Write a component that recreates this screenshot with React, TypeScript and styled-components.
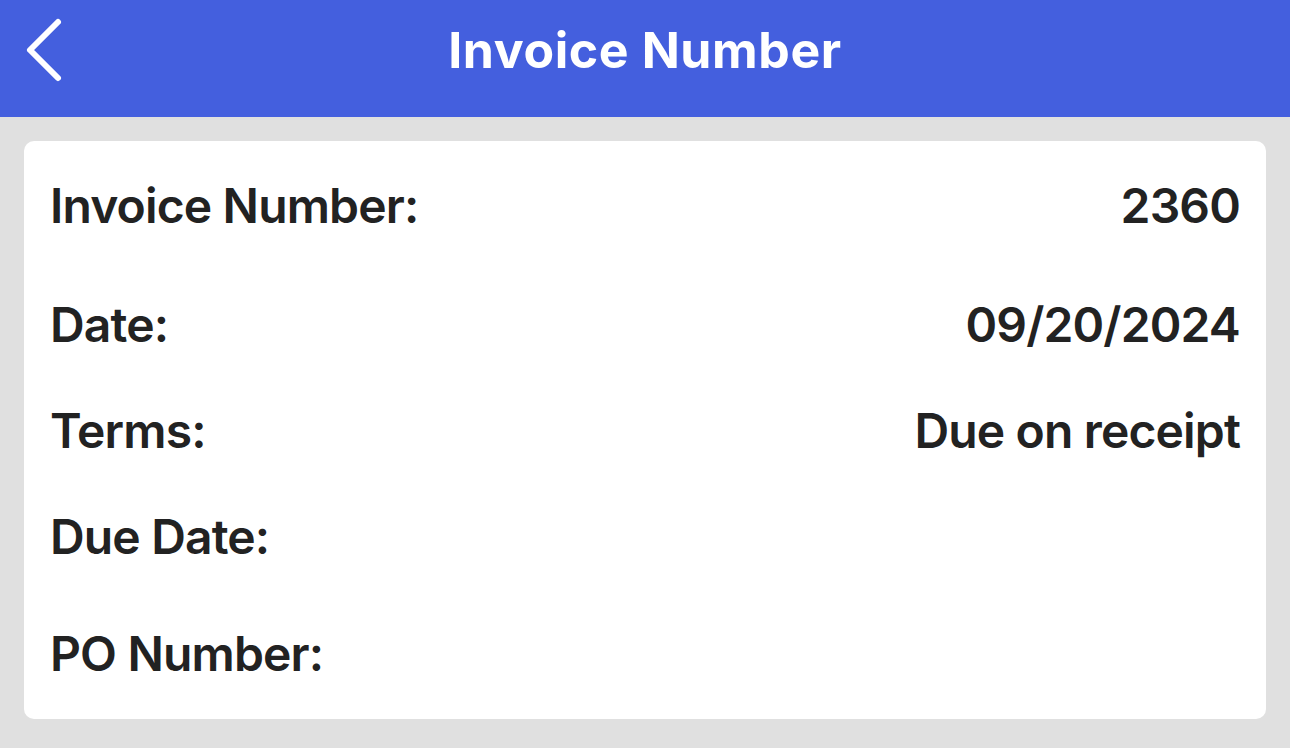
import React from "react";
import styled, { createGlobalStyle } from "styled-components";

const GlobalStyle = createGlobalStyle`
  html, body {
    margin: 0;
    padding: 0;
    background: #e0e0e0;
    font-family: "Inter", "Roboto", "Liberation Sans", sans-serif;
  }
  * { box-sizing: border-box; }
`;

const Screen = styled.div`
  width: 1290px;
  min-height: 748px;
  display: flex;
  flex-direction: column;
  background: #e0e0e0;
`;

const Header = styled.header`
  height: 117px;
  background: #445fde;
  padding-bottom: 17px;
  display: flex;
  flex-direction: column;
`;

const NavRow = styled.div`
  flex: 1;
  display: grid;
  grid-template-columns: 120px 1fr 120px;
  align-items: center;
`;

const BackButton = styled.button`
  border: 0;
  background: transparent;
  padding: 0 0 0 22px;
  display: flex;
  align-items: center;
  height: 70px;
  cursor: pointer;
`;

const Title = styled.h1`
  margin: 0;
  text-align: center;
  color: #ffffff;
  font-size: 50px;
  font-weight: 700;
  letter-spacing: 0.6px;
  line-height: 60px;
`;

const Content = styled.main`
  padding: 24px 24px 26px;
`;

const Card = styled.section`
  background: #ffffff;
  border-radius: 10px;
  padding: 0 26px 3px;
  display: flex;
  flex-direction: column;
`;

const Row = styled.div<{ $h: number }>`
  height: ${(p) => p.$h}px;
  display: flex;
  align-items: center;
  justify-content: space-between;
  color: #222222;
  font-size: 48px;
  font-weight: 600;
  letter-spacing: -0.85px;
  line-height: 58px;
`;

const Label = styled.span``;
const Value = styled.span`
  text-align: right;
`;

const rows: { label: string; value: string; h: number }[] = [
  { label: "Invoice Number:", value: "2360", h: 129 },
  { label: "Date:", value: "09/20/2024", h: 109 },
  { label: "Terms:", value: "Due on receipt", h: 103 },
  { label: "Due Date:", value: "", h: 109 },
  { label: "PO Number:", value: "", h: 125 },
];

export default function App() {
  return (
    <>
      <GlobalStyle />
      <Screen>
        <Header>
          <NavRow>
            <BackButton aria-label="Back">
              <svg width="44" height="66" viewBox="0 0 44 66">
                <path
                  d="M36 5 L8 33 L36 61"
                  fill="none"
                  stroke="#ffffff"
                  strokeWidth="6"
                  strokeLinecap="round"
                  strokeLinejoin="round"
                />
              </svg>
            </BackButton>
            <Title>Invoice Number</Title>
            <div />
          </NavRow>
        </Header>
        <Content>
          <Card>
            {rows.map((r) => (
              <Row key={r.label} $h={r.h}>
                <Label>{r.label}</Label>
                <Value>{r.value}</Value>
              </Row>
            ))}
          </Card>
        </Content>
      </Screen>
    </>
  );
}
